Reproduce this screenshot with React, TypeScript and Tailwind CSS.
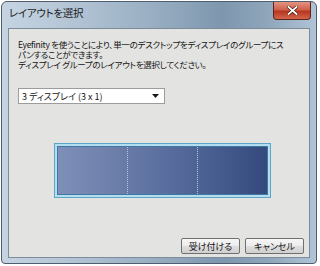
import React from 'react'

const jp = "[font-family:'Noto_Sans_CJK_JP',sans-serif] [font-feature-settings:'palt']"

function CloseButton() {
  return (
    <div className="flex h-[18px] w-[38px] shrink-0 items-center justify-center rounded-b-[4px] border-x border-b border-[#5e241c] bg-[#c4432f] bg-[linear-gradient(#e39483,#d0604a_45%,#b8361f_55%,#d2654b)]">
      <svg width="11" height="9" viewBox="0 0 11 9">
        <path d="M1.5 1 L9.5 8 M9.5 1 L1.5 8" stroke="#4a1a12" strokeWidth="3.2" strokeLinecap="square" />
        <path d="M1.5 1 L9.5 8 M9.5 1 L1.5 8" stroke="#ffffff" strokeWidth="1.8" strokeLinecap="square" />
      </svg>
    </div>
  )
}

function Button({ label }: { label: string }) {
  return (
    <button
      className={`${jp} flex h-[16px] w-full items-center justify-center rounded-[2px] border border-[#707070] bg-[linear-gradient(#f6f6f6,#ececec_50%,#dedede_51%,#d0d0d0)] text-[9px] leading-none text-[#111]`}
    >
      {label}
    </button>
  )
}

export default function App() {
  return (
    <div className="h-[266px] w-[320px] bg-white pl-[1px] pt-[1px]">
      <div className="flex h-[263px] w-[316px] flex-col overflow-hidden rounded-t-[6px] rounded-b-[4px] border border-[#4f5e6e] bg-[#a9bccd] bg-[linear-gradient(90deg,#c6d4e2,#b5c6d6_20%,#9cb1c5_45%,#7e97ae_70%,#8fa6bb_85%,#b0c4d6)]">
        {/* title bar */}
        <div className="flex h-[26px] items-start justify-between pl-[7px] pr-[5px]">
          <span className={`${jp} mt-[6px] text-[10.5px] leading-none text-[#1e1e1e] tracking-[-0.3px]`}>
            レイアウトを選択
          </span>
          <CloseButton />
        </div>

        {/* client area */}
        <div className="mx-[6px] flex flex-1 flex-col border border-[#7d8c9c] bg-[#e3e3e1]">
          <div className={`${jp} mt-[11px] flex flex-col gap-[1px] pl-[9px] text-[8.5px] leading-[9px] tracking-[-0.3px] text-[#141414]`}>
            <div className="whitespace-nowrap">Eyefinity を使うことにより、単一のデスクトップをディスプレイのグループにス</div>
            <div className="whitespace-nowrap">パンすることができます。</div>
            <div className="whitespace-nowrap">ディスプレイ グループのレイアウトを選択してください。</div>
          </div>

          <div className="mt-[19px] ml-[9px] flex h-[16px] w-[147px] items-center justify-between border border-[#9c9c9c] bg-white pl-[3px] pr-[5px]">
            <span className={`${jp} text-[9px] leading-none text-[#141414]`}>3 ディスプレイ (3 x 1)</span>
            <svg width="7" height="4" viewBox="0 0 7 4">
              <path d="M0 0 H7 L3.5 4 Z" fill="#1a1a1a" />
            </svg>
          </div>

          <div className="mt-[39px] ml-[45px] h-[55px] w-[217px] border border-[#5ea4c6] bg-[#b4def0] p-[2px]">
            <div className="flex h-full w-full border border-[#3f79a0] bg-[linear-gradient(to_right,#7e90b9_0%,#6a7ca8_30%,#5b6f9f_50%,#4b6193_70%,#344a7d_100%)]">
              <div className="flex-1 border-r border-dotted border-[#b9c4dc]" />
              <div className="flex-1 border-r border-dotted border-[#b9c4dc]" />
              <div className="flex-1" />
            </div>
          </div>

          <div className="mt-auto mb-[3px] flex justify-end gap-[5px] pr-[5px]">
            <div className="w-[59px]">
              <Button label="受け付ける" />
            </div>
            <div className="w-[59px]">
              <Button label="キャンセル" />
            </div>
          </div>
        </div>
        <div className="h-[5px] shrink-0" />
      </div>
    </div>
  )
}
